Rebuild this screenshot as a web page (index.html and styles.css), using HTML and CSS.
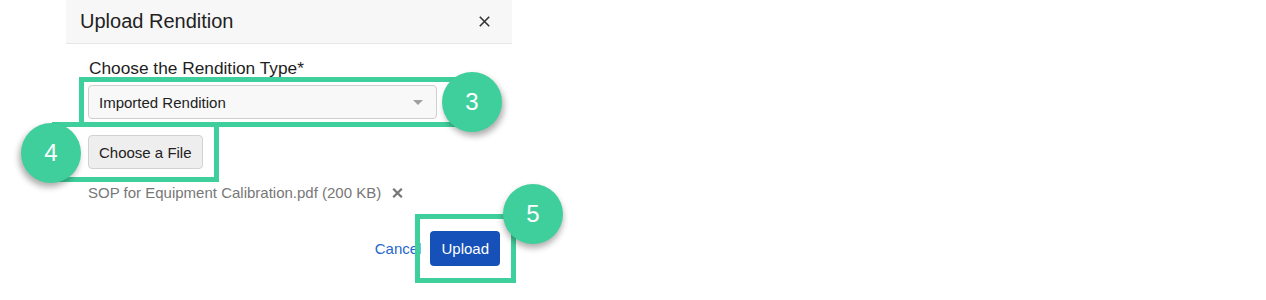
FILE: index.html
```html
<!DOCTYPE html>
<html lang="en">
<head>
<meta charset="utf-8">
<title>Upload Rendition</title>
<link rel="stylesheet" href="styles.css">
</head>
<body>
<div class="page">
  <div class="dialog">
    <div class="dialog-header">
      <h2 class="dialog-title">Upload Rendition</h2>
      <button class="close-btn" aria-label="Close">
        <svg width="11" height="11" viewBox="0 0 11 11"><path d="M0.8 0.8 L10.2 10.2 M10.2 0.8 L0.8 10.2" stroke="#333" stroke-width="1.6" fill="none"/></svg>
      </button>
    </div>
    <div class="dialog-body">
      <label class="field-label">Choose the Rendition Type*</label>
      <div class="select">
        <span class="select-value">Imported Rendition</span>
        <span class="caret"></span>
      </div>
      <button class="file-btn">Choose a File</button>
      <div class="file-row">
        <span class="file-name">SOP for Equipment Calibration.pdf (200 KB)</span>
        <svg class="file-remove" width="11" height="10" viewBox="0 0 11 10"><path d="M1.2 0.8 L9.8 9.2 M9.8 0.8 L1.2 9.2" stroke="#777" stroke-width="2.3" fill="none"/></svg>
      </div>
    </div>
    <div class="dialog-footer">
      <a class="cancel-link" href="#">Cancel</a>
      <button class="primary-btn">Upload</button>
    </div>

    <div class="hl hl-3"></div>
    <div class="hl hl-4"></div>
    <div class="hl hl-5"></div>
    <div class="step step-3">3</div>
    <div class="step step-4">4</div>
    <div class="step step-5">5</div>
  </div>
</div>
</body>
</html>
```

FILE: styles.css
```css
html, body {
  margin: 0;
  padding: 0;
  background: #fff;
}

body {
  font-family: "Liberation Sans", Arial, sans-serif;
  color: #222;
}

.page {
  padding-left: 66px;
}

.dialog {
  position: relative;
  width: 446px;
  background: #fff;
}

.dialog-header {
  height: 43px;
  border-bottom: 1px solid #e6e6e6;
  background: #f7f7f7;
  display: flex;
  align-items: center;
  justify-content: space-between;
  padding: 0 22px 0 14px;
}

.dialog-title {
  margin: 0;
  font-size: 20px;
  font-weight: normal;
  line-height: 23px;
  color: #222;
}

.close-btn {
  border: 0;
  padding: 0;
  margin: 0;
  background: transparent;
  width: 11px;
  height: 11px;
  display: flex;
}

.dialog-body {
  display: flex;
  flex-direction: column;
  align-items: flex-start;
  padding: 14px 0 0 22px;
}

.field-label {
  font-size: 17.3px;
  line-height: 20px;
  color: #1e1e1e;
  padding-left: 1px;
}

.select {
  margin-top: 7px;
  box-sizing: border-box;
  width: 349px;
  height: 34px;
  border: 1px solid #cfcfcf;
  border-radius: 4px;
  background: #f8f8f8;
  display: flex;
  align-items: center;
  justify-content: space-between;
  padding: 0 13px 0 10px;
  font-size: 15px;
  color: #222;
}

.caret {
  width: 0;
  height: 0;
  border-left: 5px solid transparent;
  border-right: 5px solid transparent;
  border-top: 5px solid #a0a0a0;
}

.file-btn {
  margin-top: 16px;
  box-sizing: border-box;
  height: 34px;
  padding: 0 10px;
  border: 1px solid #d2d2d2;
  border-radius: 4px;
  background: #eeeeee;
  font-family: "Liberation Sans", Arial, sans-serif;
  font-size: 15px;
  color: #222;
}

.file-row {
  margin-top: 15px;
  display: flex;
  align-items: center;
  font-size: 15px;
  line-height: 18px;
  color: #777;
}

.file-remove {
  margin-left: 11px;
  margin-top: -1px;
}

.dialog-footer {
  display: flex;
  justify-content: flex-end;
  align-items: center;
  padding: 29px 12px 20px 0;
}

.cancel-link {
  font-size: 15px;
  color: #1f68cc;
  text-decoration: none;
  margin-right: 9px;
}

.primary-btn {
  box-sizing: border-box;
  height: 35px;
  padding: 0 11px;
  border: 0;
  border-radius: 4px;
  background: #1551b8;
  color: #fff;
  font-family: "Liberation Sans", Arial, sans-serif;
  font-size: 15px;
}

/* annotation overlays */
.hl {
  position: absolute;
  box-sizing: border-box;
  border: 5px solid #3fcf9c;
}

.hl-3 {
  left: 13px;
  top: 77px;
  width: 376px;
  height: 50px;
}

.hl-4 {
  left: -14px;
  top: 122px;
  width: 167px;
  height: 60px;
}

.hl-5 {
  left: 349px;
  top: 214px;
  width: 101px;
  height: 69px;
}

.step {
  position: absolute;
  width: 60px;
  height: 60px;
  border-radius: 50%;
  background: #3fcf9c;
  color: #fff;
  font-size: 24px;
  display: flex;
  align-items: center;
  justify-content: center;
  box-shadow: 0 4px 6px rgba(0, 0, 0, 0.32);
}

.step-3 {
  left: 376px;
  top: 72px;
  box-shadow: 2px 4px 6px rgba(0, 0, 0, 0.32);
}

.step-4 {
  left: -45px;
  top: 123px;
  box-shadow: -2px 4px 6px rgba(0, 0, 0, 0.32);
}

.step-5 {
  left: 437px;
  top: 184px;
}
```
